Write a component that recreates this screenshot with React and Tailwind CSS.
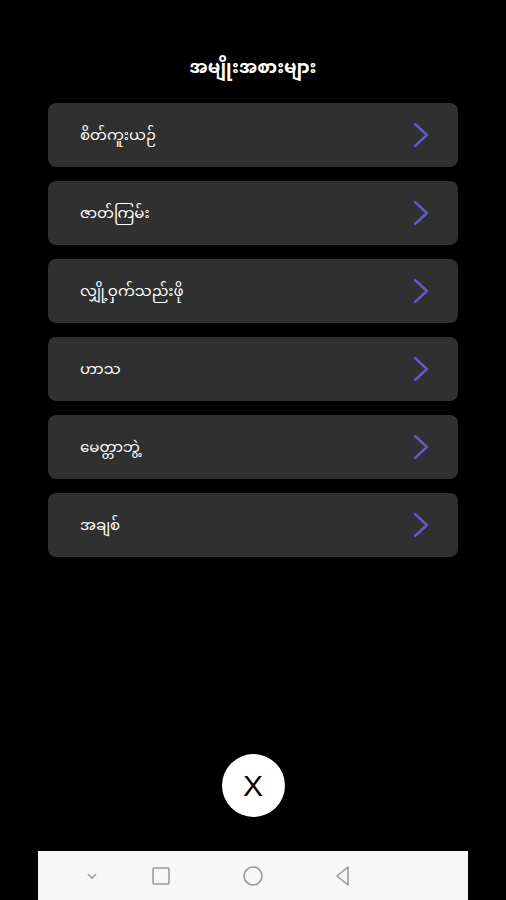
const categories = [
  "စိတ်ကူးယဉ်",
  "ဇာတ်ကြမ်း",
  "လျှို့ဝှက်သည်းဖို",
  "ဟာသ",
  "မေတ္တာဘွဲ့",
  "အချစ်",
];

const font = {
  fontFamily: '"Noto Sans Myanmar", "Padauk", "Myanmar Text", "Noto Sans", sans-serif',
};

const Chevron = () => (
  <svg width="18" height="26" viewBox="0 0 18 26" fill="none" stroke="#6459cc" strokeWidth="2.4" strokeLinecap="round" strokeLinejoin="round">
    <path d="M3 2l12 11L3 24" />
  </svg>
);

const NavBar = () => (
  <div className="mx-[38px] h-[49px] bg-[#f7f7f7] flex items-center text-[#9a9a9a] pl-[47px]">
    <svg width="14" height="10" viewBox="0 0 14 10" fill="none" stroke="currentColor" strokeWidth="1.6">
      <path d="M3 3l4 4 4-4" />
    </svg>
    <svg className="ml-[52px]" width="20" height="20" viewBox="0 0 20 20" fill="none" stroke="currentColor" strokeWidth="1.6">
      <rect x="2" y="2" width="16" height="16" rx="1.5" />
    </svg>
    <svg className="ml-[71px]" width="22" height="22" viewBox="0 0 22 22" fill="none" stroke="currentColor" strokeWidth="1.6">
      <circle cx="11" cy="11" r="9" />
    </svg>
    <svg className="ml-[69px]" width="20" height="22" viewBox="0 0 20 22" fill="none" stroke="currentColor" strokeWidth="1.6" strokeLinejoin="round">
      <path d="M15 2L4 11l11 9z" />
    </svg>
  </div>
);

export default function App() {
  return (
    <div className="w-[506px] h-[900px] bg-black flex flex-col" style={font}>
      <div className="h-[20px]" />
      <div className="h-[79px] flex items-center justify-center pt-[18px]">
        <h1 className="text-white text-[18px] font-bold">အမျိုးအစားများ</h1>
      </div>
      <div className="flex flex-col gap-[14px] px-[48px] pt-[4px]">
        {categories.map((c) => (
          <div
            key={c}
            className="h-[64px] rounded-[8px] bg-[#303030] flex items-center justify-between pl-[32px] pr-[28px]"
          >
            <span className="text-white text-[15px] pt-[4px]">{c}</span>
            <Chevron />
          </div>
        ))}
      </div>
      <div className="flex-1" />
      <div className="flex justify-center pb-[34px]">
        <button className="w-[63px] h-[63px] rounded-full bg-white flex items-center justify-center text-black text-[30px] leading-none" style={{ fontFamily: '"Liberation Sans", sans-serif' }}>
          X
        </button>
      </div>
      <NavBar />
    </div>
  );
}
